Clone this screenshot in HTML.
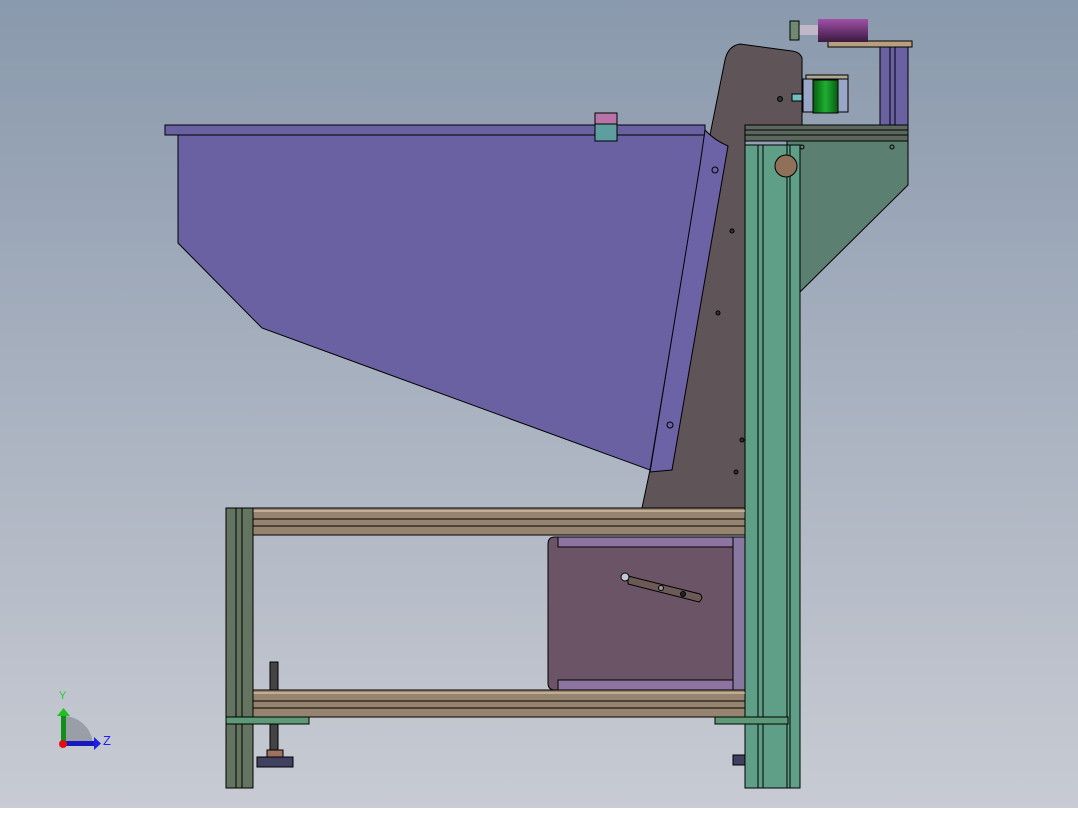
<!DOCTYPE html><html><head><style>html,body{margin:0;padding:0}body{width:1078px;height:808px;overflow:hidden}</style></head><body>
<svg width="1078" height="808" viewBox="0 0 1078 808" xmlns="http://www.w3.org/2000/svg" font-family="Liberation Sans, sans-serif">
<defs><linearGradient id="bg" x1="0" y1="0" x2="0" y2="1"><stop offset="0" stop-color="#8a99ad"/><stop offset="1" stop-color="#c8cbd3"/></linearGradient>
<linearGradient id="cyl" x1="0" y1="0" x2="0" y2="1"><stop offset="0" stop-color="#a050a8"/><stop offset="1" stop-color="#3a1a40"/></linearGradient>
<linearGradient id="mot" x1="0" y1="0" x2="1" y2="0"><stop offset="0" stop-color="#0a5a10"/><stop offset=".5" stop-color="#1cb030"/><stop offset="1" stop-color="#0a5a10"/></linearGradient></defs>
<rect width="1078" height="808" fill="url(#bg)"/>
<g stroke="#000" stroke-width="1">
<path d="M740 44 Q728 46 725 60 L710 135 L650 470 L642 508 L745 508 L745 125 L802 125 L802 58 Q800 52 792 51 Z" fill="#5f5457"/>
<circle cx="780" cy="99" r="2.5" fill="#333"/><circle cx="732" cy="231" r="2" fill="#333"/><circle cx="718" cy="313" r="2" fill="#333"/><circle cx="742" cy="440" r="2" fill="#333"/><circle cx="736" cy="472" r="2" fill="#333"/>
<rect x="165" y="125" width="540" height="10" fill="#6961a2"/>
<path d="M178 135 L708 135 L700 170 L650 470 L262 328 L178 243 Z" fill="#6961a2"/>
<path d="M705 130 Q714 140 728 146 L672 470 L650 472 L700 165 Z" fill="#6b63a5"/>
<circle cx="715" cy="170" r="3" fill="none"/><circle cx="670" cy="425" r="3" fill="none"/>
<rect x="595" y="113" width="22" height="11" fill="#b874a8"/><rect x="595" y="124" width="22" height="17" fill="#5f9e9e"/>
<rect x="880" y="47" width="28" height="78" fill="#6961a2"/><line x1="890" y1="47" x2="890" y2="125"/><line x1="895" y1="47" x2="895" y2="125"/>
<rect x="828" y="41" width="84" height="6" fill="#b8a07f"/>
<rect x="818" y="19" width="50" height="23" fill="url(#cyl)" stroke="none"/>
<rect x="798" y="25" width="20" height="10" fill="#c0b8c8" stroke="none"/>
<rect x="790" y="21" width="9" height="19" fill="#6f8a70"/>
<rect x="806" y="75" width="42" height="8" fill="#b0a890"/>
<rect x="803" y="79" width="45" height="33" fill="#9aa6c8"/>
<rect x="813" y="80" width="25" height="33" fill="url(#mot)"/>
<rect x="792" y="94" width="10" height="7" fill="#70c0c0"/>
<rect x="745" y="125" width="163" height="16" fill="#5c675e"/><line x1="745" y1="130" x2="908" y2="130"/><line x1="745" y1="135" x2="908" y2="135"/>
<path d="M787 141 L908 141 L908 185 L800 292 L787 292 Z" fill="#5b7f70"/>
<circle cx="892" cy="147" r="2" fill="none"/><circle cx="794" cy="280" r="2" fill="none"/><circle cx="802" cy="147" r="2" fill="none"/>
<rect x="745" y="145" width="55" height="643" fill="#5f9e87"/>
<line x1="758" y1="145" x2="758" y2="788"/><line x1="763" y1="145" x2="763" y2="788"/><line x1="787" y1="145" x2="787" y2="788"/><line x1="790" y1="145" x2="790" y2="788"/>
<circle cx="786" cy="166" r="11" fill="#8f7058"/>
<rect x="270" y="662" width="8" height="88" fill="#444"/>
<g fill="#978470"><rect x="253" y="508" width="492" height="27"/><rect x="253" y="690" width="492" height="27"/></g>
<line x1="253" y1="511" x2="745" y2="511" stroke="#e8d8b8"/><line x1="253" y1="519" x2="745" y2="519"/><line x1="253" y1="526" x2="745" y2="526"/>
<line x1="253" y1="693" x2="745" y2="693" stroke="#e8d8b8"/><line x1="253" y1="701" x2="745" y2="701"/><line x1="253" y1="708" x2="745" y2="708"/>
<path d="M555 537 L745 537 L745 690 L555 690 Q548 690 548 683 L548 544 Q548 537 555 537 Z" fill="#6c5467"/>
<rect x="558" y="537" width="175" height="10" fill="#8e74a0"/><rect x="558" y="680" width="175" height="10" fill="#8e74a0"/><rect x="733" y="537" width="12" height="153" fill="#8878a0"/>
<path d="M628 576 L700 594 Q704 598 699 602 L628 584 Z" fill="#6b5a55"/>
<circle cx="625" cy="577" r="4" fill="#c0c8d0"/><circle cx="661" cy="588" r="2.5" fill="#999"/><circle cx="683" cy="594" r="2.5" fill="#223"/>
<rect x="226" y="508" width="27" height="280" fill="#637560"/><line x1="236" y1="508" x2="236" y2="788"/><line x1="242" y1="508" x2="242" y2="788"/>
<rect x="226" y="717" width="83" height="7" fill="#5c9a78"/><rect x="715" y="717" width="73" height="7" fill="#5c9a78"/>
<rect x="267" y="750" width="16" height="7" fill="#a07060"/>
<rect x="257" y="757" width="36" height="10" fill="#404060"/>
<rect x="733" y="755" width="12" height="10" fill="#404060"/>
</g>
<path d="M63 716 A30 30 0 0 1 93 746 L63 746 Z" fill="#9a9ea6"/>
<rect x="61" y="715" width="5" height="31" fill="#109018"/><path d="M57 716 L63.5 708 L70 716 Z" fill="#20c020"/>
<rect x="63" y="741" width="32" height="5" fill="#1818c0"/><path d="M94 737 L101 743.5 L94 750 Z" fill="#2020e0"/>
<circle cx="63" cy="744" r="4" fill="#e01010"/>
<text x="59" y="699" font-size="11" fill="#20d020">Y</text><text x="103" y="745" font-size="13" fill="#2020ff">Z</text>
</svg></body></html>
